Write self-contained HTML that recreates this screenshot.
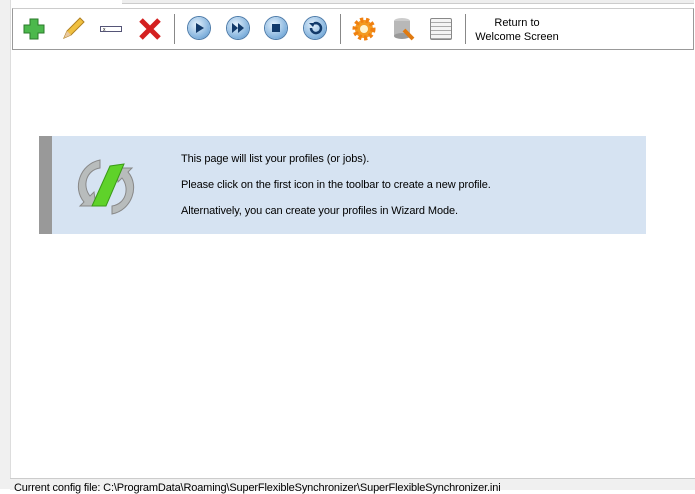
<!DOCTYPE html>
<html><head><style>
body{margin:0;width:695px;height:489px;overflow:hidden;background:#fff;font-family:"Liberation Sans",sans-serif;position:relative}
.abs{position:absolute}
.sep{position:absolute;top:14px;width:1px;height:30px;background:#888}
.btn{position:absolute;top:17px;width:22px;height:22px;border-radius:50%;background:radial-gradient(circle at 40% 35%,#e6f2fc,#7fb0dc 70%,#3f7bb5);box-shadow:0 0 0 1px #4a79a8}
.txt{position:absolute;left:181px;font-size:11px;color:#000;letter-spacing:-0.1px}
</style></head><body>
<div class="abs" style="left:0;top:0;width:10px;height:489px;background:#f0f0f0;border-right:1px solid #ddd"></div>
<div class="abs" style="left:122px;top:0;width:572px;height:3px;background:#eee;border-bottom:1px solid #ccc"></div>
<div class="abs" style="left:12px;top:8px;width:680px;height:40px;border:1px solid #999;border-top-color:#ccc;background:#fff"></div>
<svg class="abs" style="left:22px;top:17px" width="24" height="24"><path d="M8 2h8v6h6v8h-6v6h-8v-6h-6v-8h6z" fill="#4cb84c" stroke="#2a7a2a"/></svg>
<svg class="abs" style="left:60px;top:16px" width="26" height="26"><path d="M4 22l3-7 13-13 4 4-13 13z" fill="#f0c040" stroke="#b08020"/><path d="M4 22l3-7 4 4z" fill="#e8c8a0"/></svg>
<div class="abs" style="left:100px;top:26px;width:22px;height:6px;border:1px solid #557;font-size:5px;line-height:6px;padding-left:2px;box-sizing:border-box">x</div>
<svg class="abs" style="left:138px;top:17px" width="24" height="24"><path d="M3 3L21 21M21 3L3 21" stroke="#d42020" stroke-width="5"/></svg>
<div class="sep" style="left:174px"></div>
<div class="btn" style="left:188px"></div><svg class="abs" style="left:188px;top:17px" width="22" height="22"><path d="M8 6l8 5-8 5z" fill="#123a6a"/></svg>
<div class="btn" style="left:227px"></div><svg class="abs" style="left:227px;top:17px" width="22" height="22"><path d="M5 6l6 5-6 5zM11 6l6 5-6 5z" fill="#123a6a"/></svg>
<div class="btn" style="left:265px"></div><svg class="abs" style="left:265px;top:17px" width="22" height="22"><rect x="7" y="7" width="8" height="8" fill="#123a6a"/></svg>
<div class="btn" style="left:304px"></div><svg class="abs" style="left:304px;top:17px" width="22" height="22"><path d="M7 11a5 5 0 1 0 3-4.5" stroke="#123a6a" stroke-width="2.5" fill="none"/><path d="M5 6l6 0-2 4z" fill="#123a6a"/></svg>
<div class="sep" style="left:340px"></div>
<svg class="abs" style="left:351px;top:16px" width="26" height="26"><circle cx="13" cy="13" r="9" fill="#f39a20" stroke="#f08010" stroke-width="5" stroke-dasharray="3 2.5"/><circle cx="13" cy="13" r="4" fill="#fff4d0"/></svg>
<svg class="abs" style="left:392px;top:16px" width="26" height="26"><ellipse cx="10" cy="5" rx="8" ry="3" fill="#ccc"/><rect x="2" y="5" width="16" height="15" fill="#b8b8b8"/><ellipse cx="10" cy="20" rx="8" ry="3" fill="#999"/><path d="M12 14l9 9" stroke="#e07a10" stroke-width="4"/></svg>
<div class="abs" style="left:430px;top:18px;width:20px;height:20px;border:1px solid #888;border-radius:2px;background:repeating-linear-gradient(#f4f4f4 0 3px,#aaa 3px 4px)"></div>
<div class="sep" style="left:465px"></div>
<div class="abs" style="left:470px;top:16px;width:94px;text-align:center;font-size:11px;line-height:14px">Return to<br>Welcome Screen</div>
<div class="abs" style="left:39px;top:136px;width:607px;height:98px;background:#d6e3f2"></div>
<div class="abs" style="left:39px;top:136px;width:13px;height:98px;background:#999"></div>
<svg class="abs" style="left:70px;top:148px" width="75" height="75"><path d="M30 12c-20 4-28 28-16 42l-4 4 16 0-2-14-4 4c-8-10-4-26 10-28z" fill="#b8bcbc" stroke="#888"/><path d="M42 66c20-4 28-28 16-42l4-4-16 0 2 14 4-4c8 10 4 26-10 28z" fill="#b8bcbc" stroke="#888"/><path d="M22 58L40 18 54 16 36 58z" fill="#5fd22a" stroke="#3a9a18"/></svg>
<div class="txt" style="top:153px">This page will list your profiles (or jobs).</div>
<div class="txt" style="top:179px">Please click on the first icon in the toolbar to create a new profile.</div>
<div class="txt" style="top:205px">Alternatively, you can create your profiles in Wizard Mode.</div>
<div class="abs" style="left:10px;top:478px;width:685px;height:11px;background:#f0f0f0;border-top:1px solid #ccc"></div>
<div class="abs" style="left:14px;top:482px;font-size:11px;letter-spacing:-0.15px;white-space:nowrap">Current config file: C:\ProgramData\Roaming\SuperFlexibleSynchronizer\SuperFlexibleSynchronizer.ini</div>
</body></html>
